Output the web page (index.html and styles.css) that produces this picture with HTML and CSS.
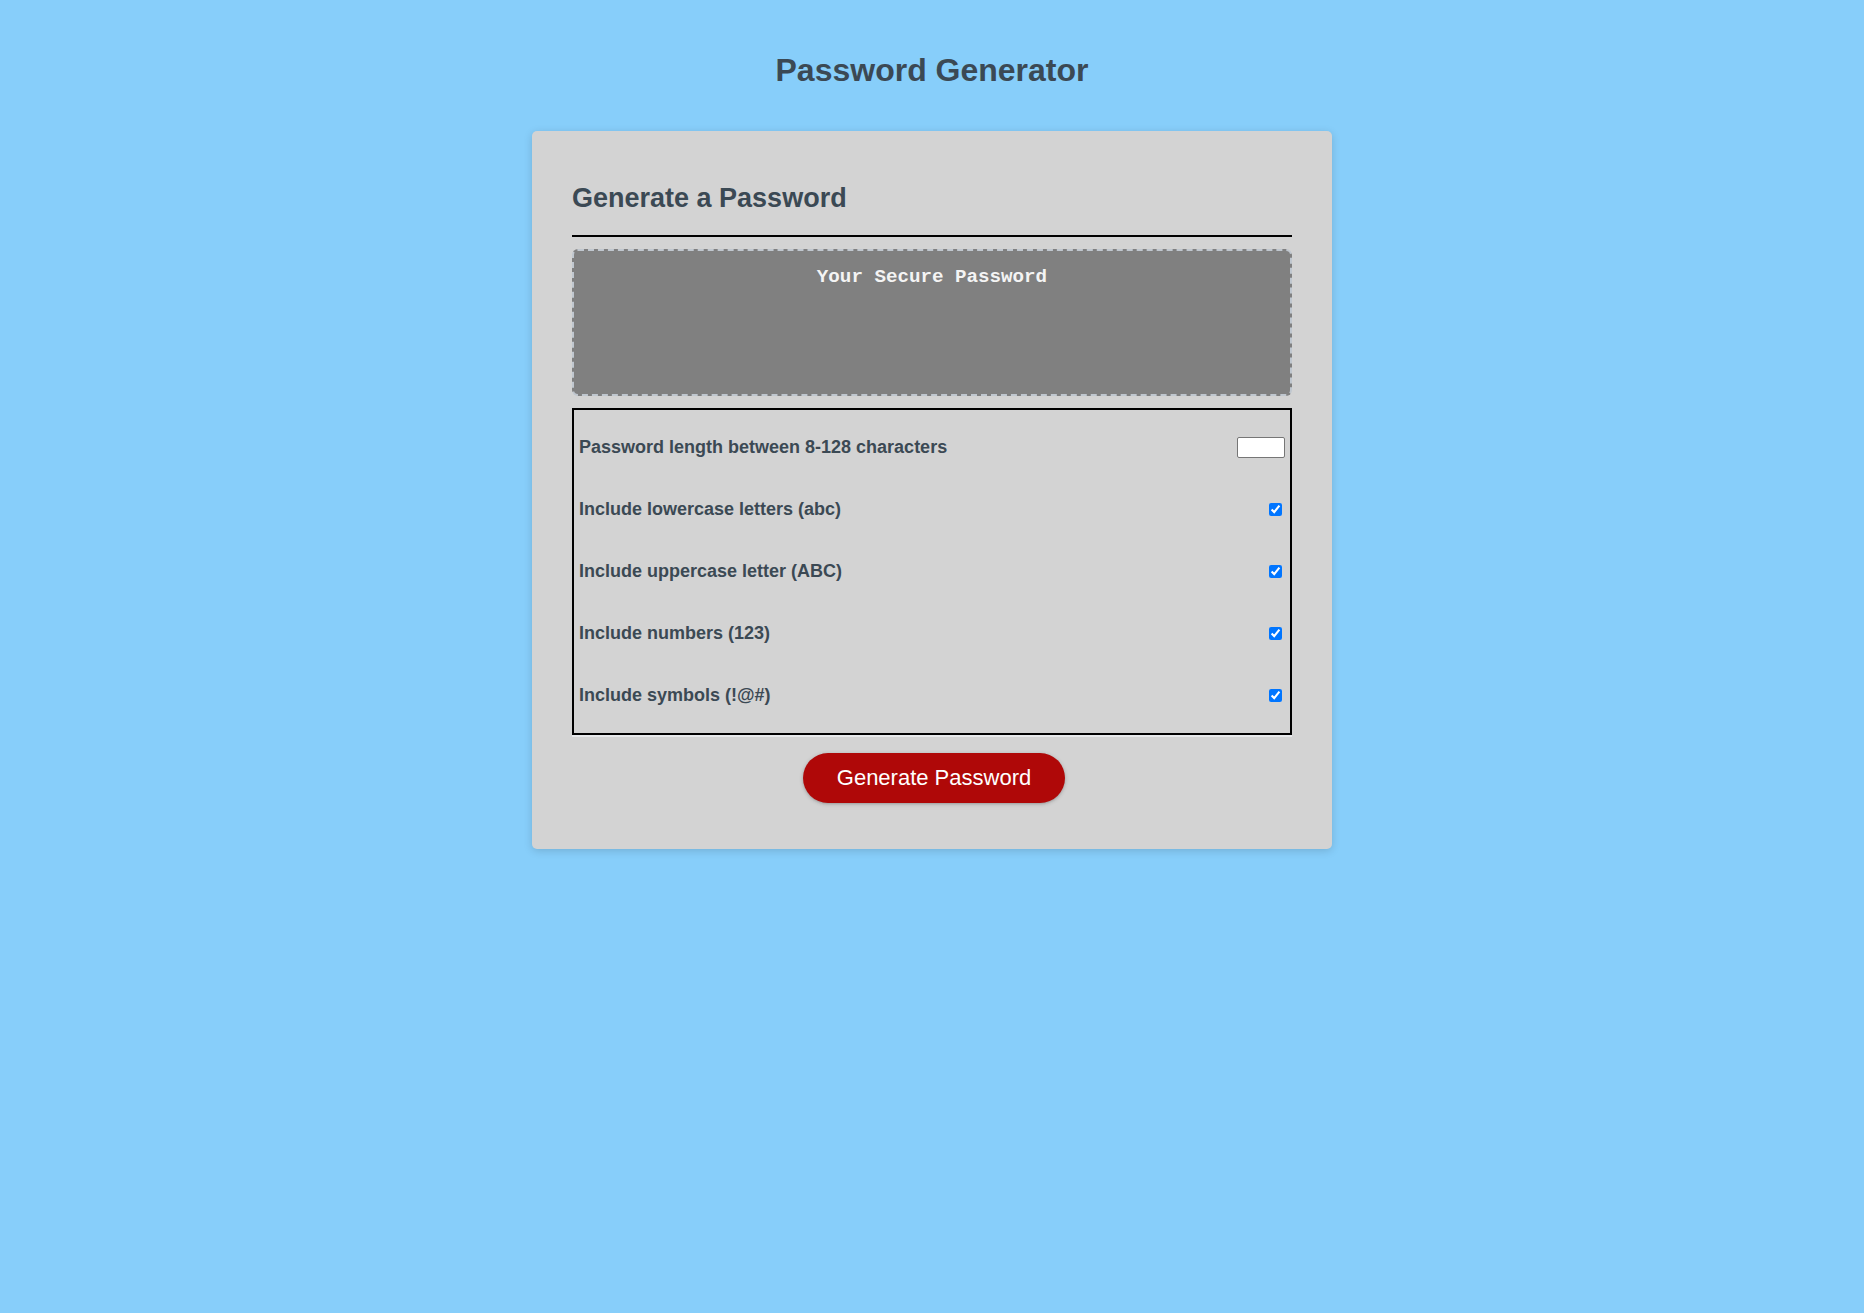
FILE: index.html
```html
<!DOCTYPE html>
<html lang="en">
<head>
<meta charset="UTF-8">
<title>Password Generator</title>
<link rel="stylesheet" href="styles.css">
</head>
<body>
  <header class="header">
    <h1 class="title">Password Generator</h1>
  </header>
  <main class="card">
    <div class="card-header">
      <h2 class="card-title">Generate a Password</h2>
    </div>
    <div class="card-body">
      <textarea class="password" readonly placeholder="Your Secure Password" aria-label="Generated Password"></textarea>
      <div class="options">
        <div class="option-row">
          <label class="option-label" for="len">Password length between 8-128 characters</label>
          <input class="length-input" id="len" type="text">
        </div>
        <div class="option-row">
          <label class="option-label" for="lower">Include lowercase letters (abc)</label>
          <input class="check" id="lower" type="checkbox" checked>
        </div>
        <div class="option-row">
          <label class="option-label" for="upper">Include uppercase letter (ABC)</label>
          <input class="check" id="upper" type="checkbox" checked>
        </div>
        <div class="option-row">
          <label class="option-label" for="nums">Include numbers (123)</label>
          <input class="check" id="nums" type="checkbox" checked>
        </div>
        <div class="option-row">
          <label class="option-label" for="syms">Include symbols (!@#)</label>
          <input class="check" id="syms" type="checkbox" checked>
        </div>
      </div>
    </div>
    <div class="card-footer">
      <button class="btn" type="button">Generate Password</button>
    </div>
  </main>
</body>
</html>
```

FILE: styles.css
```css
* {
  box-sizing: border-box;
}

html,
body {
  margin: 0;
  padding: 0;
}

body {
  background-color: #87cefa;
  color: #3b4954;
  font-family: "Liberation Sans", Arial, sans-serif;
  min-height: 1313px;
}

.header {
  padding: 52px 0 42px;
}

.title {
  margin: 0;
  text-align: center;
  font-size: 32px;
  font-weight: 700;
  line-height: 37px;
}

.card {
  display: block;
  width: 800px;
  margin: 0 auto;
  padding: 31px 40px 30px;
  background-color: #d3d3d3;
  border-radius: 5px;
  box-shadow: rgba(0, 0, 0, 0.15) 0 2px 8px 0;
}

.card-title {
  margin: 21px 0 0;
  font-size: 27px;
  font-weight: 700;
  line-height: 31px;
}

.card-header::after {
  content: "";
  display: block;
  height: 2px;
  margin-top: 21px;
  background: #000;
}

.password {
  display: block;
  width: 100%;
  height: 147px;
  margin: 12px 0 0;
  padding: 15px 15px 85px;
  background-color: #808080;
  border: 2px dashed #c0c7cf;
  border-radius: 6px;
  font-family: "Liberation Mono", "Courier New", monospace;
  font-size: 19.2px;
  font-weight: 700;
  text-align: center;
  color: #fff;
  resize: none;
  overflow: hidden;
  outline: none;
  appearance: none;
}

.password::placeholder {
  color: #f4f4f4;
  opacity: 1;
}

.options {
  margin-top: 12px;
  border: 2px solid #000;
  padding: 6.5px 5px 6.5px 5px;
}

.option-row {
  display: flex;
  justify-content: space-between;
  align-items: center;
  height: 62px;
}

.option-label {
  font-size: 18px;
  font-weight: 700;
}

.length-input {
  width: 48px;
  height: 21px;
  margin: 0;
  padding: 1px 2px;
  border: 1px solid #767676;
  border-radius: 2px;
  background: #fff;
  font-size: 13px;
}

.check {
  width: 13px;
  height: 13px;
  margin: 3px 3px 3px 4px;
}

.card-footer {
  text-align: center;
}

.card-footer::before {
  content: "";
  display: block;
  height: 2px;
  background: #e7e9eb;
}

.btn {
  display: inline-block;
  margin: 16px 16px 16px 20px;
  padding: 14px 34px;
  border: none;
  border-radius: 25px;
  background-color: #af0808;
  color: #fff;
  font-family: "Liberation Sans", Arial, sans-serif;
  font-size: 22px;
  line-height: 22px;
  box-shadow: rgba(0, 0, 0, 0.1) 0 1px 2px 0, rgba(0, 0, 0, 0.2) 0 1px 4px 0;
  cursor: pointer;
}
```
